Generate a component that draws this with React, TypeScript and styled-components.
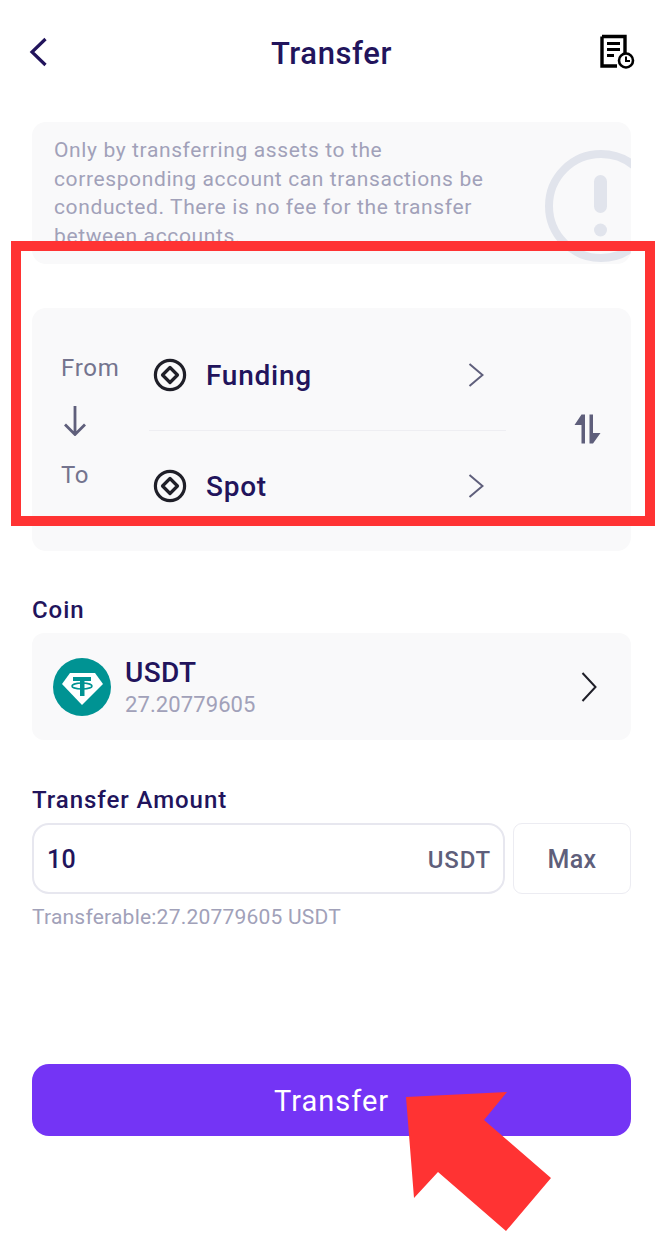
import styled, { createGlobalStyle } from 'styled-components';

const GlobalStyle = createGlobalStyle`
  html, body {
    margin: 0;
    padding: 0;
    background: #fff;
  }

  * {
    box-sizing: border-box;
  }
`;

const Page = styled.div`
  position: relative;
  width: 668px;
  height: 1236px;
  overflow: hidden;

  font-family: Roboto, 'Liberation Sans', sans-serif;
  color: #22145c;
  background: #fff;
`;

const Header = styled.header`
  display: grid;
  grid-template-columns: 1fr auto 1fr;
  align-items: center;

  height: 104px;
  padding: 0 33px 0 28px;
`;

const HeaderIcon = styled.div<{ end?: boolean }>`
  display: flex;
  justify-content: ${(props) => (props.end ? 'flex-end' : 'flex-start')};
`;

const Title = styled.h1`
  margin: 0;
  padding-top: 2px;

  font-size: 31px;
  font-weight: 500;
  letter-spacing: 0.6px;
`;

const Main = styled.main`
  display: flex;
  flex-direction: column;

  padding: 18px 37px 0 32px;
`;

const Notice = styled.div`
  position: relative;

  height: 142px;
  padding: 14px 120px 0 22px;
  overflow: hidden;

  font-size: 21px;
  line-height: 28.6px;
  letter-spacing: 0.62px;
  color: #a1a1b9;

  background: #f9f9fa;
  border-radius: 14px;
`;

const NoticeMark = styled.svg`
  position: absolute;
  top: 28px;
  left: 512px;
`;

const DirectionCard = styled.section`
  display: flex;

  height: 243px;
  margin-top: 44px;
  padding: 12px 0 10px 29px;

  background: #f9f9fa;
  border-radius: 14px;
`;

const DirectionLabels = styled.div`
  display: flex;
  flex-direction: column;
  align-items: flex-start;

  width: 88px;
  padding-top: 33px;
`;

const DirectionLabel = styled.span`
  font-size: 24px;
  line-height: 30px;
  letter-spacing: 0.7px;
  color: #74748e;
`;

const DownArrow = styled.svg`
  margin: 22px 0 24px;
`;

const Accounts = styled.div`
  width: 357px;
`;

const AccountRow = styled.div<{ divided?: boolean }>`
  display: flex;
  align-items: center;
  gap: 19px;

  height: ${(props) => (props.divided ? '111px' : '110px')};
  padding: 0 22px 0 4px;

  border-bottom: ${(props) => (props.divided ? '1px solid #eeeef2' : 'none')};
`;

const AccountName = styled.span`
  flex: 1;

  font-size: 28px;
  font-weight: 500;
  letter-spacing: 0.75px;
`;

const SwapButton = styled.div`
  align-self: center;

  display: flex;

  margin: -3px 0 0 68px;
`;

const FieldLabel = styled.label<{ gapTop: number }>`
  margin-top: ${(props) => props.gapTop}px;
  margin-bottom: 8px;

  font-size: 24px;
  font-weight: 500;
  line-height: 30px;
  letter-spacing: 0.95px;
`;

const CoinCard = styled.div`
  display: flex;
  align-items: center;
  gap: 14px;

  height: 107px;
  padding: 0 34px 0 21px;

  background: #f9f9fa;
  border-radius: 12px;
`;

const CoinInfo = styled.div`
  display: flex;
  flex-direction: column;
  flex: 1;

  padding-top: 4px;
`;

const CoinName = styled.span`
  font-size: 28px;
  font-weight: 500;
  line-height: 32px;
  letter-spacing: 0.4px;
`;

const CoinBalance = styled.span`
  font-size: 22px;
  line-height: 32px;
  letter-spacing: 0.1px;
  color: #a1a1b9;
`;

const AmountRow = styled.div`
  display: flex;
  gap: 8px;

  height: 71px;
`;

const AmountInput = styled.div`
  display: flex;
  align-items: center;
  justify-content: space-between;

  width: 473px;
  padding: 2px 12px 0 13px;

  border: 2px solid #e7e7ef;
  border-radius: 17px;
`;

const AmountValue = styled.span`
  font-size: 25px;
  font-weight: 500;
  letter-spacing: 0.4px;
`;

const AmountUnit = styled.span`
  font-size: 24px;
  font-weight: 500;
  letter-spacing: 0.8px;
  color: #5f5f7b;
`;

const MaxButton = styled.div`
  display: flex;
  align-items: center;
  justify-content: center;

  width: 118px;
  padding-top: 1px;

  font-size: 25px;
  font-weight: 500;
  letter-spacing: 0.3px;
  color: #5f5f7b;

  border: 1px solid #ececf2;
  border-radius: 9px;
`;

const Hint = styled.div`
  margin-top: 9px;

  font-size: 21px;
  line-height: 28px;
  letter-spacing: 0.22px;
  color: #a1a1b9;
`;

const SubmitButton = styled.button`
  height: 72px;
  margin-top: 133px;
  padding: 2px 0 0;

  font-family: inherit;
  font-size: 29px;
  letter-spacing: 1px;
  color: #fff;

  background: #7434f5;
  border: none;
  border-radius: 17px;
`;

const HighlightFrame = styled.div`
  position: absolute;
  top: 241px;
  left: 11px;

  width: 644px;
  height: 285px;

  border: 10px solid #ff3333;
`;

const PointerArrow = styled.svg`
  position: absolute;
  top: 0;
  left: 0;
`;

const Chevron = ({ color, width, height }: { color: string; width: number; height: number }) => (
  <svg width={width} height={height} viewBox={`0 0 ${width} ${height}`} fill="none">
    <path
      d={`M1.5 1 L${width - 1.5} ${height / 2} L1.5 ${height - 1}`}
      stroke={color}
      strokeWidth="2"
    />
  </svg>
);

const AccountIcon = () => (
  <svg width="34" height="34" viewBox="0 0 34 34" fill="none">
    <circle cx="17" cy="17" r="14.6" stroke="#1f1f28" strokeWidth="3.2" />
    <path d="M17 9.5 L24.5 17 L17 24.5 L9.5 17 Z" stroke="#1f1f28" strokeWidth="3.2" strokeLinejoin="round" />
  </svg>
);

const Account = ({ name, divided }: { name: string; divided?: boolean }) => (
  <AccountRow divided={divided}>
    <AccountIcon />
    <AccountName>{name}</AccountName>
    <Chevron color="#5f5f7b" width={16} height={24} />
  </AccountRow>
);

const App = () => {
  return (
    <Page>
      <GlobalStyle />

      <Header>
        <HeaderIcon>
          <svg width="20" height="30" viewBox="0 0 20 30" fill="none">
            <path d="M17.5 2 L4 15 L17.5 28" stroke="#22145c" strokeWidth="3.2" />
          </svg>
        </HeaderIcon>
        <Title>Transfer</Title>
        <HeaderIcon end>
          <svg width="36" height="36" viewBox="0 0 36 36" fill="none">
            <path d="M3 2.5 H26 V20 M18 32 H3 V2.5" stroke="#000" strokeWidth="3.4" />
            <path d="M8 9.5 H21 M8 15.5 H21 M8 21.5 H15" stroke="#000" strokeWidth="3.2" />
            <circle cx="27" cy="26.5" r="7" fill="#fff" stroke="#000" strokeWidth="2.6" />
            <path d="M27 22.5 V27 H31" stroke="#000" strokeWidth="2" />
          </svg>
        </HeaderIcon>
      </Header>

      <Main>
        <Notice>
          Only by transferring assets to the corresponding account can transactions be conducted. There is no fee for
          the transfer between accounts.
          <NoticeMark width="112" height="112" viewBox="0 0 112 112" fill="none">
            <circle cx="57" cy="56" r="52" stroke="#e1e4ec" strokeWidth="8" />
            <rect x="50" y="25" width="13" height="38" rx="6.5" fill="#e1e4ec" />
            <circle cx="56.5" cy="80" r="6.5" fill="#e1e4ec" />
          </NoticeMark>
        </Notice>

        <DirectionCard>
          <DirectionLabels>
            <DirectionLabel>From</DirectionLabel>
            <DownArrow width="28" height="31" viewBox="0 0 28 31" fill="none">
              <path d="M14 1 V29 M4 19.5 L14 29.5 L24 19.5" stroke="#5f5f7b" strokeWidth="2.8" />
            </DownArrow>
            <DirectionLabel>To</DirectionLabel>
          </DirectionLabels>

          <Accounts>
            <Account name="Funding" divided />
            <Account name="Spot" />
          </Accounts>

          <SwapButton>
            <svg width="27" height="30" viewBox="0 0 27 30" fill="none">
              <path d="M11 0.5 H7.5 L0.5 11 H7.5 V29.5 H11 Z" fill="#5f5f7b" />
              <path d="M15.5 0.5 H19 V19 H26.5 L19 29.5 H15.5 Z" fill="#5f5f7b" />
            </svg>
          </SwapButton>
        </DirectionCard>

        <FieldLabel gapTop={44}>Coin</FieldLabel>
        <CoinCard>
          <svg width="58" height="58" viewBox="0 0 58 58">
            <circle cx="29" cy="29" r="29" fill="#009393" />
            <path d="M17 15 H42 L50 26 L29 47 L9 26 Z" fill="#fff" />
            <path d="M20 19 H38 V23 H31.5 V38 H27 V23 H20 Z" fill="#009393" />
            <ellipse cx="29" cy="28" rx="10" ry="3" fill="none" stroke="#009393" strokeWidth="1.6" />
          </svg>
          <CoinInfo>
            <CoinName>USDT</CoinName>
            <CoinBalance>27.20779605</CoinBalance>
          </CoinInfo>
          <Chevron color="#1f1f28" width={16} height={30} />
        </CoinCard>

        <FieldLabel gapTop={45}>Transfer Amount</FieldLabel>
        <AmountRow>
          <AmountInput>
            <AmountValue>10</AmountValue>
            <AmountUnit>USDT</AmountUnit>
          </AmountInput>
          <MaxButton>Max</MaxButton>
        </AmountRow>
        <Hint>Transferable:27.20779605 USDT</Hint>

        <SubmitButton>Transfer</SubmitButton>
      </Main>

      <HighlightFrame />
      <PointerArrow width="668" height="1236" viewBox="0 0 668 1236">
        <path d="M406 1097 L507 1092 L484 1120 L551 1178 L506 1231 L438 1172 L414 1198 Z" fill="#ff3333" />
      </PointerArrow>
    </Page>
  );
};

export default App;
